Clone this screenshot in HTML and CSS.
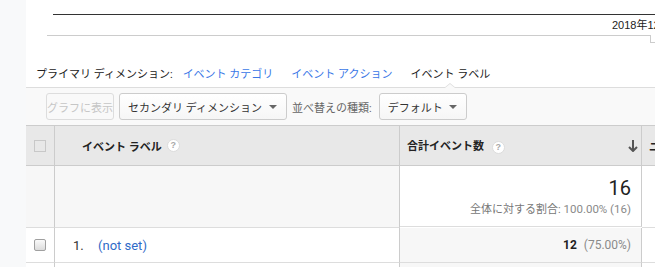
FILE: index.html
```html
<!DOCTYPE html>
<html>
<head>
<meta charset="utf-8">
<title>イベント ラベル</title>
<link rel="stylesheet" href="styles.css">
</head>
<body>
<div class="page">
  <div class="gutter"></div>
  <div class="main">
    <div class="chart">
      <div class="chart-line"></div>
      <div class="chart-date">2018年12月</div>
      <div class="chart-axis"><span class="axis-handle"></span></div>
    </div>

    <div class="dims">
      <span class="dims-title">プライマリ ディメンション:</span>
      <a class="dim-link">イベント カテゴリ</a>
      <a class="dim-link">イベント アクション</a>
      <span class="dim-current">イベント ラベル</span>
    </div>

    <div class="toolbar">
      <button class="btn btn-disabled">グラフに表示</button>
      <button class="btn btn-select">セカンダリ ディメンション <span class="caret"></span></button>
      <span class="sort-label">並べ替えの種類:</span>
      <button class="btn btn-select btn-sort">デフォルト <span class="caret"></span></button>
    </div>

    <div class="table">
      <!-- header -->
      <div class="cell head check-col"><span class="box"></span></div>
      <div class="cell head dim-col">イベント ラベル <span class="help">?</span></div>
      <div class="cell head metric-col">
        <span>合計イベント数 <span class="help">?</span></span>
        <svg class="sort-arrow" width="10" height="12" viewBox="0 0 10 12">
          <path d="M5 0 V11 M1 7 L5 11 L9 7" fill="none" stroke="#555" stroke-width="2"/>
        </svg>
      </div>
      <div class="cell head extra-col">ユニーク イベント数</div>

      <!-- totals -->
      <div class="cell total check-col"></div>
      <div class="cell total dim-col"></div>
      <div class="cell total metric-col total-metric">
        <div class="total-num">16</div>
        <div class="total-share">全体に対する割合: <span class="num-grey">100.00% (16)</span></div>
      </div>
      <div class="cell total extra-col plain"></div>

      <!-- row 1 -->
      <div class="cell row check-col"><span class="box box-row"></span></div>
      <div class="cell row dim-col"><span class="row-idx">1.</span><a class="row-link">(not set)</a></div>
      <div class="cell row metric-col row-metric"><b>12</b><span class="pct">(75.00%)</span></div>
      <div class="cell row extra-col"></div>

      <!-- row 2 (cut off) -->
      <div class="cell row check-col"></div>
      <div class="cell row dim-col"></div>
      <div class="cell row metric-col row-metric"></div>
      <div class="cell row extra-col"></div>
    </div>
  </div>
</div>
</body>
</html>
```

FILE: styles.css
```css
body {
	margin: 0;
	background-color: #f8f9fa;
	font-family: Roboto, "Noto Sans CJK JP", sans-serif;
	font-size: 11px;
	color: #222;
	overflow: hidden;
}
.page {
	display: flex;
	height: 267px;
	overflow: hidden;
}
.gutter {
	width: 26px;
	flex: none;
}
.main {
	flex: 1;
	min-width: 0;
	background-color: #fff;
	overflow: hidden;
}

/* chart strip */
.chart {
	padding-top: 14px;
}
.chart-line {
	height: 1px;
	margin-left: 27px;
	background-color: #333;
}
.chart-date {
	margin-top: 4px;
	padding-left: 586px;
	font-family: "Liberation Sans", "Noto Sans CJK JP", sans-serif;
	font-size: 11px;
	line-height: 13px;
	white-space: nowrap;
	color: #222;
}
.chart-axis {
	position: relative;
	height: 1px;
	margin-top: 3px;
	margin-left: 21px;
	background-color: #ccc;
}
.axis-handle {
	position: absolute;
	right: -3px;
	top: 0;
	width: 6px;
	height: 7px;
	border: 1px solid #ccc;
	border-top: none;
	background: #fff;
}

/* primary dimension tabs */
.dims {
	display: flex;
	padding: 30px 0 3px 10px;
	line-height: 18px;
	border-bottom: 1px solid #ddd;
	white-space: nowrap;
}
.dims-title {
	margin-right: 10px;
}
.dim-link {
	margin-right: 18px;
	color: #3b78e7;
	cursor: pointer;
}
.dim-current {
	position: relative;
	color: #222;
}
.dim-current::before,
.dim-current::after {
	content: "";
	position: absolute;
	left: 50%;
	margin-left: -6px;
	border: 6px solid transparent;
	border-top: none;
}
.dim-current::before {
	bottom: -4px;
	border-bottom: 5px solid #ddd;
}
.dim-current::after {
	bottom: -4px;
	border-left-width: 5px;
	border-right-width: 5px;
	margin-left: -5px;
	border-bottom: 4px solid #f9f9f9;
}

/* toolbar */
.toolbar {
	display: flex;
	align-items: center;
	height: 27px;
	padding: 5px 0 5px 20px;
	background-color: #f9f9f9;
	white-space: nowrap;
}
.btn {
	height: 27px;
	margin-right: 5px;
	border: 1px solid #ccc;
	border-radius: 3px;
	background: linear-gradient(#fff, #f6f6f6);
	font-family: inherit;
	font-size: 11px;
	color: #333;
	display: flex;
	align-items: center;
}
.btn-disabled {
	width: 68px;
	padding: 0 1px;
	justify-content: center;
	border-color: #ddd;
	background: #f9f9f9;
	color: #c6c6c6;
}
.btn-select {
	width: 168px;
	padding: 0 9px 0 8px;
	justify-content: space-between;
}
.btn-sort {
	width: 88px;
}
.caret {
	width: 0;
	height: 0;
	border-left: 4px solid transparent;
	border-right: 4px solid transparent;
	border-top: 4px solid #666;
}
.sort-label {
	margin-right: 7px;
	color: #666;
}

/* table */
.table {
	display: grid;
	grid-template-columns: 29px 345px 242px 1fr;
	border-top: 1px solid #ccc;
}
.cell {
	display: flex;
	align-items: center;
	border-right: 1px solid #ccc;
	border-bottom: 1px solid #ddd;
	white-space: nowrap;
	overflow: hidden;
}
.head {
	height: 39px;
	background-color: #e8e8e8;
	font-weight: bold;
	border-bottom-color: #ccc;
}
.check-col {
	justify-content: center;
}
.box {
	width: 12px;
	height: 12px;
	border: 1px solid #c8c8c8;
	box-sizing: border-box;
}
.box-row {
	border-color: #a0a0a0;
	border-radius: 2px;
	background: linear-gradient(#fafafa, #dcdcdc);
}
.head.dim-col {
	padding-left: 27px;
}
.head.metric-col {
	padding: 0 3px 0 7px;
	justify-content: space-between;
}
.head.extra-col {
	padding-left: 7px;
	border-right: none;
}
.help {
	display: inline-block;
	width: 11px;
	height: 11px;
	margin-left: 5px;
	border: 1px solid #dcdcdc;
	border-radius: 50%;
	background: #fff;
	color: #a8a8a8;
	font-family: "Liberation Sans", sans-serif;
	font-size: 9px;
	font-weight: bold;
	line-height: 11px;
	text-align: center;
	vertical-align: 0;
}

.total {
	height: 61px;
	background-color: #f7f7f7;
}
.total.plain,
.total-metric {
	background-color: #fff;
}
.total-metric {
	flex-direction: column;
	align-items: flex-end;
	justify-content: flex-start;
	padding: 10px 10px 0 0;
	box-sizing: border-box;
}
.total-num {
	font-size: 20px;
	line-height: 24px;
	color: #222;
}
.total-share {
	margin-top: 2px;
	line-height: 14px;
	color: #777;
}
.num-grey {
	color: #8a8a8a;
	font-size: 11.5px;
}

.row {
	height: 34px;
	background-color: #fff;
}
.extra-col {
	border-right: none;
}
.row.dim-col {
	padding-left: 18px;
	font-size: 13px;
}
.row-idx {
	width: 25px;
	color: #333;
}
.row-link {
	color: #2f6bc8;
	cursor: pointer;
}
.row-metric {
	justify-content: flex-end;
	padding-right: 10px;
	background-color: #f7f7f7;
	font-size: 12px;
}
.pct {
	margin-left: 7px;
	color: #8a8a8a;
}
```
